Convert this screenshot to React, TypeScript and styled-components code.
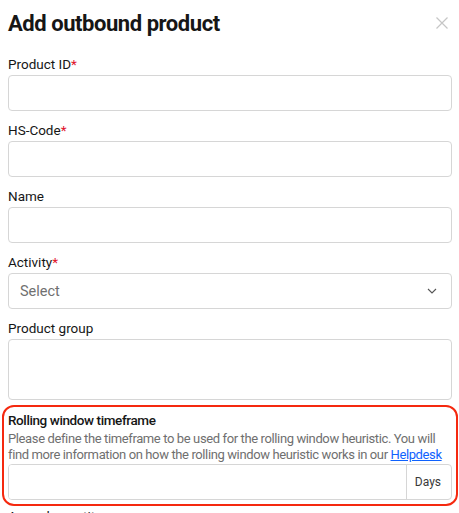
import React from "react";
import styled, { createGlobalStyle } from "styled-components";

const Global = createGlobalStyle`
  html, body { margin: 0; padding: 0; background: #fff; }
  body { font-family: Roboto, "Liberation Sans", sans-serif; color: #161616; overflow: hidden; }
  * { box-sizing: border-box; }
`;

const Modal = styled.div`
  width: 459px;
  height: 513px;
  padding: 0 7px 0 8px;
  overflow: hidden;
`;

const Header = styled.div`
  display: flex;
  align-items: flex-start;
  justify-content: space-between;
  padding-top: 9px;
  margin-bottom: 15px;
`;

const Title = styled.h2`
  margin: 0;
  font-size: 22px;
  font-weight: 700;
  line-height: 30px;
  letter-spacing: -0.45px;
  color: #161616;
`;

const Close = styled.button`
  border: 0;
  background: none;
  padding: 0;
  margin: 7px 3px 0 0;
  width: 14px;
  height: 14px;
  display: flex;
  color: #c6c6c6;
  cursor: pointer;
`;

const Field = styled.div`
  margin-bottom: 9px;
`;

const Highlight = styled.div`
  margin: -4px -6px 0 -6px;
  border: 2px solid #f5290f;
  border-radius: 12px;
  padding: 3px 4px 4px 4px;
`;

const Label = styled.label<{ $strong?: boolean }>`
  display: block;
  font-size: 13.5px;
  line-height: 20px;
  margin-bottom: 1px;
  color: #161616;
  font-weight: ${(p) => (p.$strong ? 500 : 400)};
  letter-spacing: ${(p) => (p.$strong ? "-0.4px" : "0")};
`;

const Star = styled.span`
  color: #e0122b;
`;

const Help = styled.p`
  margin: 0 0 1px;
  font-size: 13px;
  line-height: 16px;
  letter-spacing: -0.38px;
  color: #6f6f6f;
  white-space: nowrap;
`;

const Link = styled.a`
  color: #0f62fe;
  text-decoration: underline;
`;

const Input = styled.input`
  display: block;
  width: 100%;
  height: 36px;
  border: 1px solid #d6d6d6;
  border-radius: 4px;
  padding: 0 11px;
  font: inherit;
  font-size: 14px;
  outline: none;
`;

const TextArea = styled.textarea`
  display: block;
  width: 100%;
  height: 61px;
  border: 1px solid #d6d6d6;
  border-radius: 4px;
  padding: 8px 11px;
  font: inherit;
  resize: none;
  outline: none;
`;

const SelectBox = styled.div`
  display: flex;
  align-items: center;
  justify-content: space-between;
  height: 36px;
  border: 1px solid #d6d6d6;
  border-radius: 4px;
  padding: 0 14px 0 11px;
  font-size: 14.5px;
  color: #707070;
`;

const Group = styled.div`
  display: flex;
  height: 36px;
  border: 1px solid #d6d6d6;
  border-radius: 4px;
  overflow: hidden;
`;

const GroupInput = styled.input`
  flex: 1;
  border: 0;
  padding: 0 11px;
  font: inherit;
  outline: none;
  min-width: 0;
`;

const Addon = styled.span`
  display: flex;
  align-items: center;
  padding: 0 10px 0 8px;
  border-left: 1px solid #d6d6d6;
  font-size: 12px;
  color: #393939;
`;

const Req = () => <Star>*</Star>;

export default function App() {
  return (
    <Modal>
      <Global />
      <Header>
        <Title>Add outbound product</Title>
        <Close aria-label="Close">
          <svg width="14" height="14" viewBox="0 0 14 14" fill="none" stroke="currentColor" strokeWidth="1.2">
            <path d="M1.5 1.5 L12.5 12.5 M12.5 1.5 L1.5 12.5" />
          </svg>
        </Close>
      </Header>

      <Field>
        <Label>Product ID<Req /></Label>
        <Input />
      </Field>
      <Field>
        <Label>HS-Code<Req /></Label>
        <Input />
      </Field>
      <Field>
        <Label>Name</Label>
        <Input />
      </Field>
      <Field>
        <Label>Activity<Req /></Label>
        <SelectBox>
          <span>Select</span>
          <svg width="10" height="6" viewBox="0 0 10 6" fill="none" stroke="#555" strokeWidth="1.1">
            <path d="M1 1 L5 5 L9 1" />
          </svg>
        </SelectBox>
      </Field>
      <Field>
        <Label>Product group</Label>
        <TextArea />
      </Field>
      <Highlight>
        <Label $strong>Rolling window timeframe</Label>
        <Help>
          Please define the timeframe to be used for the rolling window heuristic. You will
          <br />
          find more information on how the rolling window heuristic works in our <Link href="#">Helpdesk</Link>
        </Help>
        <Group>
          <GroupInput />
          <Addon>Days</Addon>
        </Group>
      </Highlight>
      <Field>
        <Label>Annual quantity</Label>
        <Input />
      </Field>
    </Modal>
  );
}
